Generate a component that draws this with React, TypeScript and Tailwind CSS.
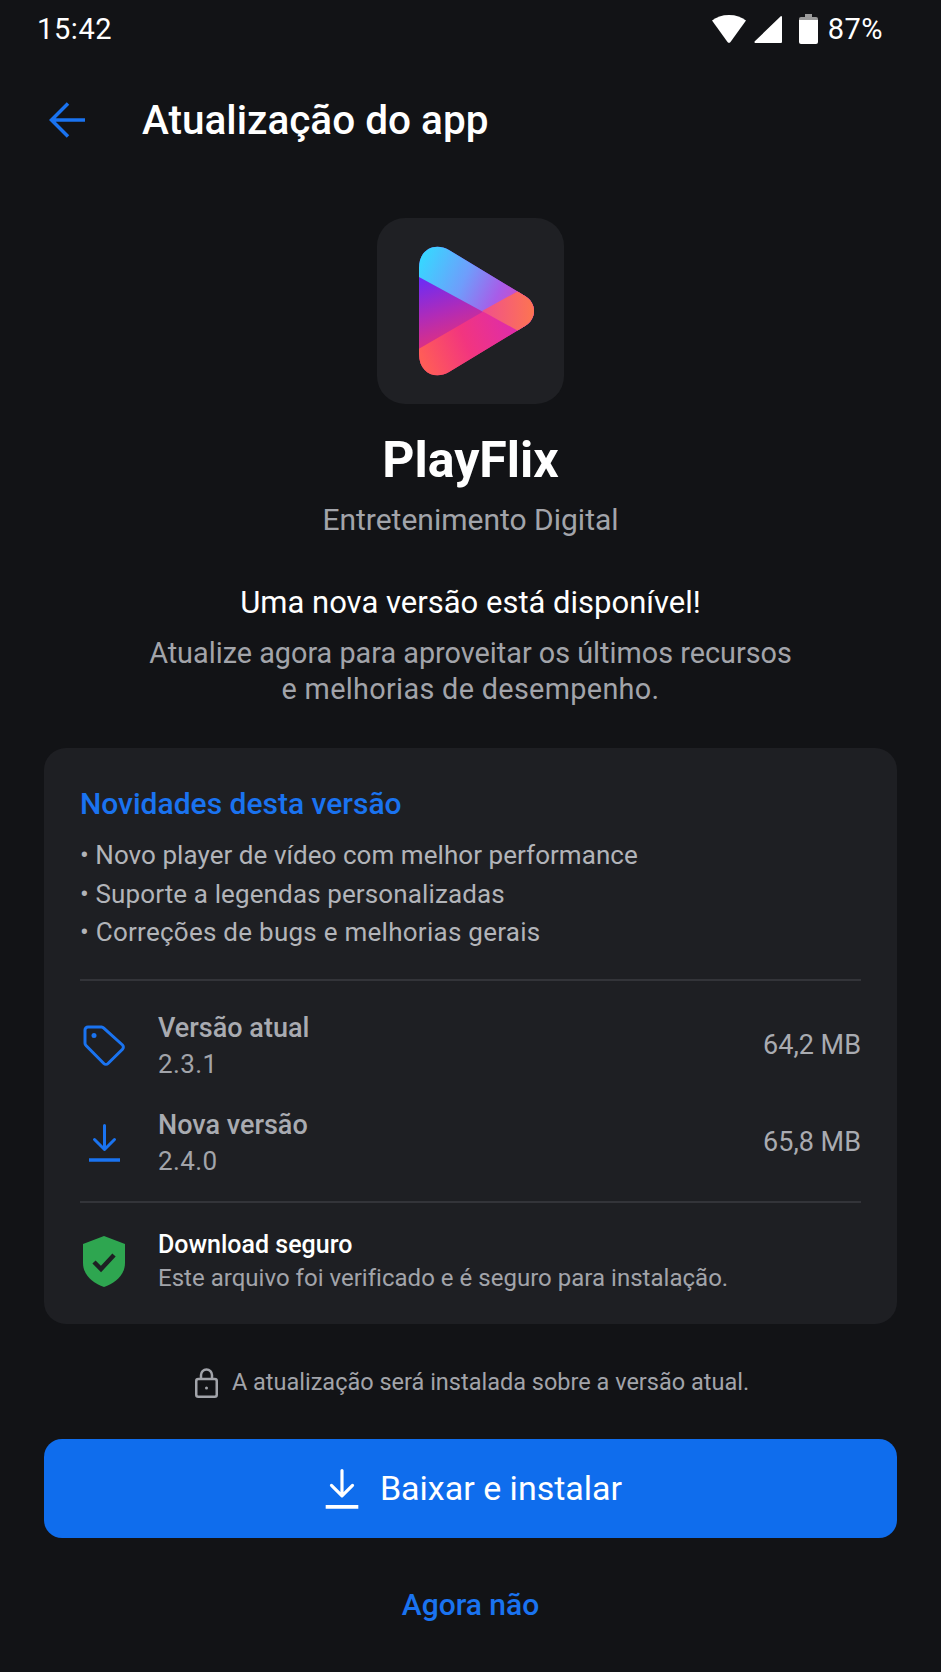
const blue = '#1a73f0';

function StatusBar() {
  return (
    <div className="flex h-[58px] items-center justify-between pl-[37px] pr-[58px] text-[29px] leading-[32px] text-white">
      <span className="tracking-[0.6px]">15:42</span>
      <div className="flex items-center">
        <svg width="34" height="28" viewBox="0 0 34 28" fill="white">
          <path d="M17 0C10 0 4.500 2 0 5.500L15.500 27a2 2 0 0 0 3 0L34 5.500C29.500 2 24 0 17 0Z" />
        </svg>
        <svg className="ml-[8px]" width="28" height="28" viewBox="0 0 28 28" fill="white">
          <path d="M27 1a1 1 0 0 1 1 1v25a1 1 0 0 1-1 1H1.500a1 1 0 0 1-.7-1.700Z" />
        </svg>
        <svg className="ml-[17px]" width="19" height="30" viewBox="0 0 19 30">
          <path fill="#9a9a9a" d="M6 0h7v3h4a2 2 0 0 1 2 2v5H0V5a2 2 0 0 1 2-2h4Z" />
          <path fill="white" d="M0 6h19v22a2 2 0 0 1-2 2H2a2 2 0 0 1-2-2Z" />
        </svg>
        <span className="ml-[10px] tracking-[0.5px]">87%</span>
      </div>
    </div>
  );
}

function Logo() {
  return (
    <div className="flex h-[186px] w-[187px] items-center justify-center rounded-[28px] bg-[#1f2024]">
      <svg width="187" height="186" viewBox="0 0 187 186">
        <defs>
          <clipPath id="tri">
            <path d="M42 50C42 31 58 24 72 32L148 78C160 85 160 101 148 108L72 154C58 162 42 155 42 136Z" />
          </clipPath>
          <linearGradient id="mid" gradientUnits="userSpaceOnUse" x1="42" y1="62" x2="62" y2="128">
            <stop offset="0" stopColor="#6c2cf5" />
            <stop offset="0.55" stopColor="#b02bb8" />
            <stop offset="1" stopColor="#e0307f" />
          </linearGradient>
          <linearGradient id="top" gradientUnits="userSpaceOnUse" x1="45" y1="40" x2="140" y2="85">
            <stop offset="0" stopColor="#38d6ff" />
            <stop offset="0.45" stopColor="#6f9dfb" />
            <stop offset="0.8" stopColor="#a85ce8" />
            <stop offset="1" stopColor="#c84fc8" />
          </linearGradient>
          <linearGradient id="bot" gradientUnits="userSpaceOnUse" x1="45" y1="140" x2="140" y2="100">
            <stop offset="0" stopColor="#ff5c58" />
            <stop offset="0.45" stopColor="#f2357f" />
            <stop offset="1" stopColor="#dc2bae" />
          </linearGradient>
          <linearGradient id="over" x1="0" y1="0" x2="1" y2="0">
            <stop offset="0" stopColor="#f0508c" />
            <stop offset="1" stopColor="#ff7a48" />
          </linearGradient>
        </defs>
        <g clipPath="url(#tri)">
          <rect x="40" y="25" width="125" height="135" fill="url(#mid)" />
          <polygon points="40,58 145,115 165,115 165,25 40,25" fill="url(#top)" />
          <polygon points="40,132 145,71 165,71 165,160 40,160" fill="url(#bot)" />
          <polygon points="105,93 145,71 165,71 165,115 145,115" fill="url(#over)" />
        </g>
      </svg>
    </div>
  );
}

function DownloadIcon({ color, width, height }: { color: string; width: number; height: number }) {
  return (
    <svg width={width} height={height} viewBox="0 0 34 38" fill="none" stroke={color} strokeWidth="3" strokeLinecap="round" strokeLinejoin="round">
      <path d="M17 1.500V25M7 15.500L17 25.500L27 15.500" />
      <path d="M1.500 36H32.500" strokeLinecap="butt" strokeWidth="3.500" />
    </svg>
  );
}

function VersionRow({ icon, label, version, size }: { icon: React.ReactNode; label: string; version: string; size: string }) {
  return (
    <div className="flex items-center justify-between">
      <div className="flex items-center">
        <div className="flex w-[48px] justify-center">{icon}</div>
        <div className="ml-[30px]">
          <div className="text-[27px] font-medium leading-[37px] text-[#a9abb1]">{label}</div>
          <div className="text-[26px] leading-[35px] tracking-[0.4px] text-[#a2a4aa]">{version}</div>
        </div>
      </div>
      <span className="text-[27px] text-[#a9abb1]">{size}</span>
    </div>
  );
}

export default function App() {
  return (
    <div className="flex h-[1672px] w-[941px] flex-col overflow-hidden bg-[#121316] font-['Roboto',sans-serif]">
      <StatusBar />

      {/* Header */}
      <div className="mt-[42px] flex h-[40px] items-center pl-[49px]">
        <svg width="36" height="36" viewBox="0 0 36 36" fill="none" stroke={blue} strokeWidth="3.500" strokeLinecap="butt">
          <path d="M36 18H3M19 1.500L2.500 18L19 34.500" />
        </svg>
        <h1 className="ml-[57px] text-[40.500px] font-medium leading-[40px] text-white">Atualização do app</h1>
      </div>

      {/* App info */}
      <div className="mt-[78px] flex flex-col items-center">
        <Logo />
        <div className="mt-[25px] text-[50px] font-bold leading-[63px] text-white">PlayFlix</div>
        <div className="mt-[10px] text-[30px] leading-[36px] text-[#a2a4aa]">Entretenimento Digital</div>
        <div className="mt-[47px] text-[31px] leading-[36px] text-white">Uma nova versão está disponível!</div>
        <div className="mt-[14px] text-center text-[28.800px] leading-[36px] text-[#a2a4aa]">
          Atualize agora para aproveitar os últimos recursos
          <br />
          <span className="tracking-[0.33px]">e melhorias de desempenho.</span>
        </div>
      </div>

      {/* Card */}
      <div className="mx-[44px] mt-[41px] h-[576px] rounded-[22px] bg-[#1e1f23] px-[36px] pt-[38px]">
        <div className="text-[30px] font-medium leading-[36px] text-[#1a73f0]">Novidades desta versão</div>
        <ul className="mt-[14px] text-[26px] leading-[38.500px] text-[#b2b4b9]">
          <li className="tracking-[0.05px]">• Novo player de vídeo com melhor performance</li>
          <li className="tracking-[0.12px]">• Suporte a legendas personalizadas</li>
          <li className="tracking-[0.26px]">• Correções de bugs e melhorias gerais</li>
        </ul>
        <div className="mt-[27px] h-[2px] bg-[#333439]" />
        <div className="mt-[29px] flex flex-col gap-[25px]">
          <VersionRow
            label="Versão atual"
            version="2.3.1"
            size="64,2 MB"
            icon={
              <svg width="42" height="41" viewBox="0 0 42 41" fill="none" stroke={blue} strokeWidth="3" strokeLinejoin="round">
                <path d="M2 5a3 3 0 0 1 3-3h13.500a3 3 0 0 1 2 .9L39.500 20a3 3 0 0 1 0 4.200L25 38.500a3 3 0 0 1-4.200 0L3 20.500a3 3 0 0 1-1-2.200Z" />
                <circle cx="11" cy="10.500" r="2.500" fill={blue} stroke="none" />
              </svg>
            }
          />
          <VersionRow label="Nova versão" version="2.4.0" size="65,8 MB" icon={<DownloadIcon color={blue} width={35} height={38} />} />
        </div>
        <div className="mt-[22px] h-[2px] bg-[#333439]" />
        <div className="mt-[25px] flex items-center">
          <div className="flex w-[48px] justify-center">
            <svg width="42" height="51" viewBox="0 0 42 51">
              <path fill="#2ea650" d="M21 0L42 8V27C42 39 32 47 21 51C10 47 0 39 0 27V8Z" />
              <path d="M11 26L18 33L31 19" fill="none" stroke="#1e1f23" strokeWidth="4.500" />
            </svg>
          </div>
          <div className="ml-[30px]">
            <div className="text-[25px] font-medium leading-[34px] text-white">Download seguro</div>
            <div className="text-[24px] leading-[33px] tracking-[0.02px] text-[#a2a4aa]">Este arquivo foi verificado e é seguro para instalação.</div>
          </div>
        </div>
      </div>

      {/* Notice */}
      <div className="mt-[43px] flex h-[32px] items-center justify-center pl-[3px]">
        <svg width="23" height="30" viewBox="0 0 23 30" fill="none" stroke="#a2a4aa" strokeWidth="2.500">
          <rect x="1.250" y="11" width="20.500" height="17.750" rx="2" />
          <path d="M6 11V7a5.500 5.500 0 0 1 11 0v4" />
          <circle cx="11.500" cy="20" r="1.500" fill="#a2a4aa" stroke="none" />
        </svg>
        <span className="ml-[14px] text-[23.500px] text-[#a2a4aa]">A atualização será instalada sobre a versão atual.</span>
      </div>

      {/* Actions */}
      <button className="mx-[44px] mt-[40px] flex h-[99px] items-center justify-center rounded-[18px] bg-[#0f6ded] pl-[5px] text-[34px] text-white">
        <DownloadIcon color="white" width={36} height={40} />
        <span className="ml-[20px]">Baixar e instalar</span>
      </button>
      <button className="mt-[47px] text-center text-[30px] font-medium leading-[40px] text-[#1a73f0]">Agora não</button>
    </div>
  );
}
